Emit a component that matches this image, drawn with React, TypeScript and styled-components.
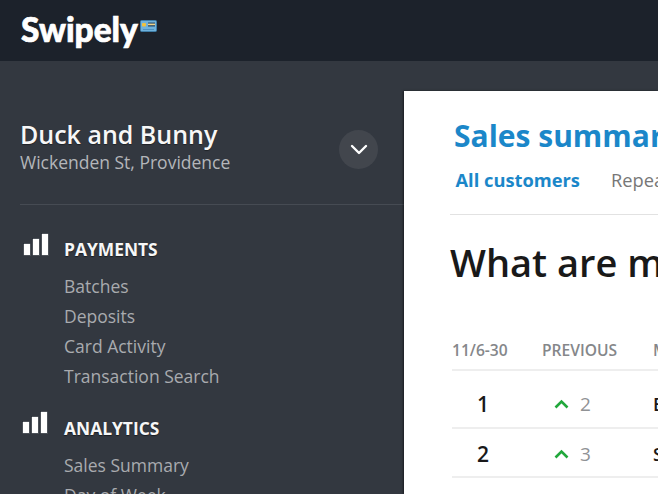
import React from "react";
import styled, { createGlobalStyle } from "styled-components";

const GlobalStyle = createGlobalStyle`
  html, body {
    margin: 0;
    padding: 0;
    height: 100%;
    overflow: hidden;
    background: #333840;
    font-family: "Open Sans", "Liberation Sans", sans-serif;
  }
`;

const Page = styled.div`
  width: 658px;
  height: 494px;
  overflow: hidden;
  display: flex;
  flex-direction: column;
`;

const TopBar = styled.header`
  flex: 0 0 61px;
  background: #1c222b;
  display: flex;
  align-items: flex-start;
  padding: 9px 0 0 21px;
  box-sizing: border-box;
`;

const Logo = styled.div`
  font-family: "Lato", sans-serif;
  font-weight: 900;
  font-size: 33.4px;
  line-height: 40px;
  color: #ffffff;
  -webkit-text-stroke: 0.7px #ffffff;
`;

const CardMark = styled.svg`
  margin: 11px 0 0 2px;
`;

const Body = styled.div`
  flex: 1;
  display: flex;
  min-height: 0;
`;

const Sidebar = styled.nav`
  flex: 0 0 404px;
  box-sizing: border-box;
  padding: 57px 0 0 20px;
  background: #333840;
`;

const Account = styled.div`
  display: flex;
  align-items: center;
  justify-content: space-between;
  padding: 0 26px 30px 0;
  border-bottom: 1px solid #464b53;
`;

const AccountName = styled.div`
  font-size: 25px;
  line-height: 32px;
  font-weight: 600;
  color: #f7f7f7;
  text-shadow: 0 1px 1px rgba(0, 0, 0, 0.4);
`;

const AccountPlace = styled.div`
  font-size: 17.5px;
  line-height: 23px;
  color: #b4b6ba;
  margin-top: 1px;
`;

const RoundButton = styled.div`
  width: 39px;
  height: 39px;
  border-radius: 50%;
  background: #42464d;
  display: flex;
  align-items: center;
  justify-content: center;
  margin-top: 7px;
`;

const Section = styled.section<{ $top: number }>`
  margin-top: ${(p) => p.$top}px;
`;

const SectionHead = styled.div`
  display: flex;
  align-items: flex-end;
  gap: 15px;
  margin-left: 3px;
`;

const SectionTitle = styled.div`
  font-size: 17.4px;
  line-height: 23px;
  font-weight: 700;
  color: #f7f7f7;
  margin-bottom: -5px;
  text-shadow: 0 1px 1px rgba(0, 0, 0, 0.5);
`;

const NavList = styled.ul`
  list-style: none;
  margin: 15px 0 0 44px;
  padding: 0;
`;

const NavItem = styled.li`
  font-size: 17.5px;
  line-height: 30px;
  color: #a9abaf;
  white-space: nowrap;
`;

const Main = styled.main`
  flex: 1;
  min-width: 0;
  margin-top: 30px;
  background: #ffffff;
  box-shadow: -1px 0 2px rgba(0, 0, 0, 0.5);
  padding: 0 0 0 46px;
  overflow: hidden;
  white-space: nowrap;
`;

const Title = styled.h1`
  margin: 25px 0 0 4px;
  font-size: 30px;
  line-height: 40px;
  font-weight: 700;
  color: #1b87c9;
`;

const Tabs = styled.div`
  display: flex;
  gap: 31px;
  margin-top: 11px;
  padding: 0 0 22px 5.5px;
  border-bottom: 1px solid #e2e2e2;
  width: 400px;
`;

const Tab = styled.div<{ $active?: boolean }>`
  font-size: 18.3px;
  line-height: 25px;
  font-weight: ${(p) => (p.$active ? 700 : 400)};
  color: ${(p) => (p.$active ? "#1b87c9" : "#777777")};
`;

const Question = styled.h2`
  margin: 22px 0 0 0;
  font-size: 38px;
  line-height: 50px;
  font-weight: 600;
  color: #191919;
`;

const Table = styled.div`
  margin: 47px 0 0 2px;
  width: 400px;
`;

const HeadRow = styled.div`
  display: grid;
  grid-template-columns: 90px 111px 1fr;
  height: 37px;
  box-sizing: border-box;
  padding-top: 6px;
  border-bottom: 2px solid #eeeeee;
  font-size: 15.6px;
  line-height: 20px;
  font-weight: 600;
  color: #85878a;
`;

const Row = styled.div<{ $height: number; $lift: number }>`
  display: grid;
  grid-template-columns: 90px 111px 1fr;
  align-items: center;
  height: ${(p) => p.$height}px;
  padding-top: ${(p) => p.$lift}px;
  box-sizing: border-box;
  border-bottom: 2px solid #eeeeee;
`;

const Rank = styled.div`
  font-size: 21px;
  font-weight: 600;
  color: #191919;
  padding-left: 25px;
`;

const Previous = styled.div`
  display: flex;
  align-items: center;
  gap: 11px;
  padding-left: 12px;
  font-size: 19px;
  color: #909295;
`;

const Item = styled.div`
  font-size: 18px;
  font-weight: 600;
  color: #191919;
`;

function CardIcon() {
  return (
    <CardMark width="17" height="12" viewBox="0 0 17 12">
      <rect x="0.5" y="0.5" width="16" height="11" rx="1" fill="#6fb2dc" stroke="#3f7ea8" />
      <rect x="2" y="3" width="4" height="3.5" rx="1" fill="#f0c23c" />
      <rect x="8" y="2.5" width="7" height="4" fill="#22486a" />
      <rect x="8" y="3.6" width="7" height="1.6" fill="#f0d48a" />
      <rect x="3" y="9" width="11" height="1" fill="#4d93c2" />
    </CardMark>
  );
}

const BarsSvg = styled.svg<{ $raise: number }>`
  margin-bottom: ${(p) => p.$raise}px;
  margin-left: ${(p) => -p.$raise}px;
  margin-right: ${(p) => p.$raise}px;
`;

function BarsIcon({ raise }: { raise: number }) {
  return (
    <BarsSvg $raise={raise} width="26" height="24" viewBox="0 0 26 24">
      <g fill="#ffffff" stroke="#1c222b" strokeWidth="0.6">
        <rect x="0.5" y="11.5" width="7" height="12" />
        <rect x="9.5" y="6.5" width="7" height="17" />
        <rect x="18.5" y="1.5" width="7" height="22" />
      </g>
    </BarsSvg>
  );
}

function ChevronDown() {
  return (
    <svg width="18" height="11" viewBox="0 0 18 11" fill="none">
      <path d="M2 2l7 7 7-7" stroke="#ffffff" strokeWidth="2.4" strokeLinecap="round" strokeLinejoin="round" />
    </svg>
  );
}

function ArrowUp() {
  return (
    <svg width="15" height="10" viewBox="0 0 15 10" fill="none">
      <path d="M1.5 8.5l6-6 6 6" stroke="#22a83c" strokeWidth="2.6" />
    </svg>
  );
}

const payments = ["Batches", "Deposits", "Card Activity", "Transaction Search"];
const analytics = ["Sales Summary", "Day of Week"];

const rows = [
  { rank: 1, previous: 2, name: "Eggs Benedict", height: 58, lift: 10 },
  { rank: 2, previous: 3, name: "Scramble", height: 49, lift: 3 },
];

export default function App() {
  return (
    <Page>
      <GlobalStyle />
      <TopBar>
        <Logo>Swipely</Logo>
        <CardIcon />
      </TopBar>
      <Body>
        <Sidebar>
          <Account>
            <div>
              <AccountName>Duck and Bunny</AccountName>
              <AccountPlace>Wickenden St, Providence</AccountPlace>
            </div>
            <RoundButton>
              <ChevronDown />
            </RoundButton>
          </Account>
          <Section $top={27}>
            <SectionHead>
              <BarsIcon raise={0} />
              <SectionTitle>PAYMENTS</SectionTitle>
            </SectionHead>
            <NavList>
              {payments.map((label) => (
                <NavItem key={label}>{label}</NavItem>
              ))}
            </NavList>
          </Section>
          <Section $top={19}>
            <SectionHead>
              <BarsIcon raise={1} />
              <SectionTitle>ANALYTICS</SectionTitle>
            </SectionHead>
            <NavList>
              {analytics.map((label) => (
                <NavItem key={label}>{label}</NavItem>
              ))}
            </NavList>
          </Section>
        </Sidebar>
        <Main>
          <Title>Sales summary</Title>
          <Tabs>
            <Tab $active>All customers</Tab>
            <Tab>Repeat customers</Tab>
          </Tabs>
          <Question>What are my best sellers?</Question>
          <Table>
            <HeadRow>
              <div>11/6-30</div>
              <div>PREVIOUS</div>
              <div>MENU ITEM</div>
            </HeadRow>
            {rows.map((row) => (
              <Row key={row.rank} $height={row.height} $lift={row.lift}>
                <Rank>{row.rank}</Rank>
                <Previous>
                  <ArrowUp />
                  {row.previous}
                </Previous>
                <Item>{row.name}</Item>
              </Row>
            ))}
          </Table>
        </Main>
      </Body>
    </Page>
  );
}
